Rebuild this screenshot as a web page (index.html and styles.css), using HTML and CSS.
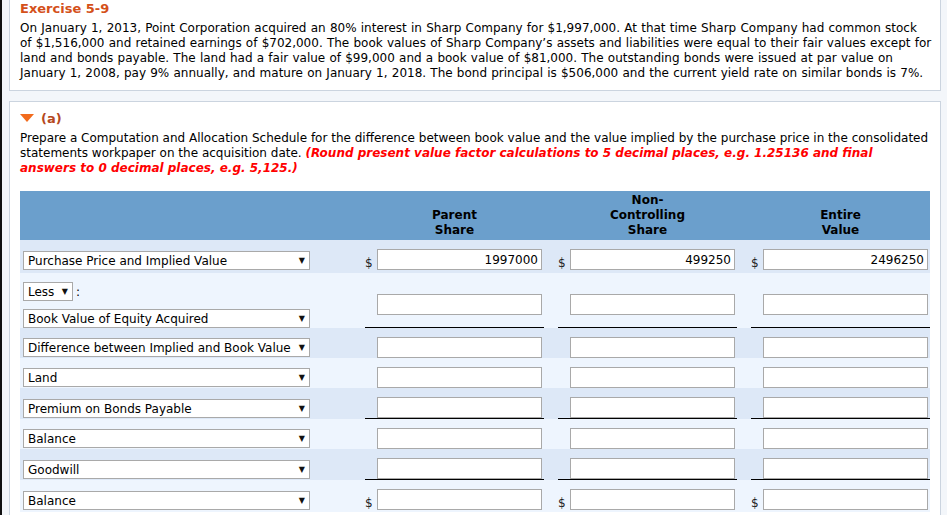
FILE: index.html
```html
<!DOCTYPE html>
<html>
<head>
<meta charset="utf-8">
<link rel="stylesheet" href="styles.css">
</head>
<body>
<div class="page">
  <section class="panel intro">
    <h1 class="title">Exercise 5-9</h1>
    <p class="text">On January 1, 2013, Point Corporation acquired an 80% interest in Sharp Company for $1,997,000. At that time Sharp Company had common stock<br>of $1,516,000 and retained earnings of $702,000. The book values of Sharp Company’s assets and liabilities were equal to their fair values except for<br>land and bonds payable. The land had a fair value of $99,000 and a book value of $81,000. The outstanding bonds were issued at par value on<br>January 1, 2008, pay 9% annually, and mature on January 1, 2018. The bond principal is $506,000 and the current yield rate on similar bonds is 7%.</p>
  </section>

  <section class="panel part">
    <div class="part-head">
      <svg class="tri" width="14" height="8" viewBox="0 0 14 8"><polygon points="0,0 14,0 7,8" fill="#f26b1d"/></svg>
      <span class="part-label">(a)</span>
    </div>
    <p class="text">Prepare a Computation and Allocation Schedule for the difference between book value and the value implied by the purchase price in the consolidated statements workpaper on the acquisition date. <em class="note">(Round present value factor calculations to 5 decimal places, e.g. 1.25136 and final answers to 0 decimal places, e.g. 5,125.)</em></p>

    <div class="sched">
      <div class="row head">
        <div></div>
        <div class="hcell">Parent<br>Share</div>
        <div class="hcell">Non-<br>Controlling<br>Share</div>
        <div class="hcell">Entire<br>Value</div>
      </div>

      <div class="row dark dollar r1">
        <div class="lab"><div class="sel wide"><span>Purchase Price and Implied Value</span><span class="arr">▼</span></div></div>
        <div class="cell"><span class="cur">$</span><input class="num" value="1997000"></div>
        <div class="cell"><span class="cur">$</span><input class="num" value="499250"></div>
        <div class="cell"><span class="cur">$</span><input class="num" value="2496250"></div>
      </div>

      <div class="row light r2">
        <div class="lab stack">
          <div class="less"><div class="sel short"><span>Less</span><span class="arr">▼</span></div><span class="colon">:</span></div>
          <div class="sel wide"><span>Book Value of Equity Acquired</span><span class="arr">▼</span></div>
        </div>
        <div class="cell ul pad"><input class="num"></div>
        <div class="cell ul pad"><input class="num"></div>
        <div class="cell ul pad"><input class="num"></div>
      </div>

      <div class="row dark">
        <div class="lab"><div class="sel wide"><span>Difference between Implied and Book Value</span><span class="arr">▼</span></div></div>
        <div class="cell"><input class="num"></div>
        <div class="cell"><input class="num"></div>
        <div class="cell"><input class="num"></div>
      </div>

      <div class="row light">
        <div class="lab"><div class="sel wide"><span>Land</span><span class="arr">▼</span></div></div>
        <div class="cell"><input class="num"></div>
        <div class="cell"><input class="num"></div>
        <div class="cell"><input class="num"></div>
      </div>

      <div class="row dark">
        <div class="lab"><div class="sel wide"><span>Premium on Bonds Payable</span><span class="arr">▼</span></div></div>
        <div class="cell ul"><input class="num"></div>
        <div class="cell ul"><input class="num"></div>
        <div class="cell ul"><input class="num"></div>
      </div>

      <div class="row light">
        <div class="lab"><div class="sel wide"><span>Balance</span><span class="arr">▼</span></div></div>
        <div class="cell"><input class="num"></div>
        <div class="cell"><input class="num"></div>
        <div class="cell"><input class="num"></div>
      </div>

      <div class="row dark">
        <div class="lab"><div class="sel wide"><span>Goodwill</span><span class="arr">▼</span></div></div>
        <div class="cell ul"><input class="num"></div>
        <div class="cell ul"><input class="num"></div>
        <div class="cell ul"><input class="num"></div>
      </div>

      <div class="row light dollar r8">
        <div class="lab"><div class="sel wide"><span>Balance</span><span class="arr">▼</span></div></div>
        <div class="cell"><span class="cur">$</span><input class="num"></div>
        <div class="cell"><span class="cur">$</span><input class="num"></div>
        <div class="cell"><span class="cur">$</span><input class="num"></div>
      </div>
    </div>
  </section>
</div>
</body>
</html>
```

FILE: styles.css
```css
html, body {
  margin: 0;
  padding: 0;
  background: #f3f6fa;
}
body {
  border-left: 2px solid #111;
  font-family: "DejaVu Sans", Verdana, sans-serif;
  font-size: 12px;
  color: #000;
  height: 515px;
  overflow: hidden;
}
.page {
  padding-left: 7px;
  width: 932px;
}
.panel {
  background: #fff;
  border: 1px solid #cbd4df;
  padding: 0 10px;
}
.intro {
  border-top: none;
  padding-top: 1px;
  padding-bottom: 9px;
}
.title {
  margin: 0;
  font-size: 13px;
  line-height: 16px;
  font-weight: bold;
  color: #d4501a;
}
.text {
  margin: 0;
  line-height: 15px;
}
.intro .text {
  margin-top: 4px;
  word-spacing: 0.4px;
  white-space: nowrap;
}
.part {
  margin-top: 10px;
  padding-top: 8px;
  border-bottom: none;
  padding-bottom: 20px;
}
.part-head {
  display: flex;
  align-items: center;
  gap: 7px;
  height: 16px;
  margin-bottom: 5px;
}
.part-label {
  font-weight: bold;
  font-size: 13px;
  color: #b5481e;
}
.note {
  color: #f00;
  font-weight: bold;
  font-style: italic;
}
.sched {
  margin-top: 15px;
  width: 910px;
}
.row {
  display: grid;
  grid-template-columns: 331px 179px 179px 179px;
  column-gap: 14px;
  align-items: stretch;
}
.head {
  background: #6b9fcc;
  height: 49px;
  font-weight: bold;
  line-height: 15px;
}
.hcell {
  display: flex;
  align-items: flex-end;
  justify-content: center;
  text-align: center;
  padding-bottom: 2px;
}
.dark { background: #dde8f7; }
.light { background: #eef5fe; }
.lab {
  display: flex;
  align-items: flex-end;
  padding: 9px 0 1px 3px;
}
.cell {
  display: flex;
  align-items: flex-end;
  padding: 9px 2px 0 12px;
}
.dollar .cell { padding-left: 0; }
.r1 .cell, .r1 .lab { padding-bottom: 3px; }
.r8 .cell, .r8 .lab { padding-bottom: 2px; }
.ul { border-bottom: 1px solid #000; }
.r2 .cell { padding-top: 21px; padding-bottom: 12px; }
.r2 .lab { padding-bottom: 0; }
.stack {
  flex-direction: column;
  align-items: flex-start;
  justify-content: flex-end;
  gap: 8px;
}
.less {
  display: flex;
  align-items: center;
}
.colon { margin-left: 3px; }
.cur {
  width: 12px;
  line-height: 14px;
  text-align: left;
  color: #222;
}
.sel {
  display: flex;
  align-items: center;
  justify-content: space-between;
  box-sizing: border-box;
  height: 19px;
  background: #fff;
  border: 1px solid #a9a9a9;
  padding: 0 4px 0 4px;
  white-space: nowrap;
}
.wide { width: 287px; }
.short { width: 50px; }
.arr {
  font-size: 8px;
  line-height: 8px;
  color: #111;
}
.num {
  box-sizing: border-box;
  width: 165px;
  height: 21px;
  margin: 0;
  border: 1px solid #a9a9a9;
  background: #fff;
  font-family: "DejaVu Sans", Verdana, sans-serif;
  font-size: 12px;
  text-align: right;
  padding: 0 3px;
  color: #000;
}
```
